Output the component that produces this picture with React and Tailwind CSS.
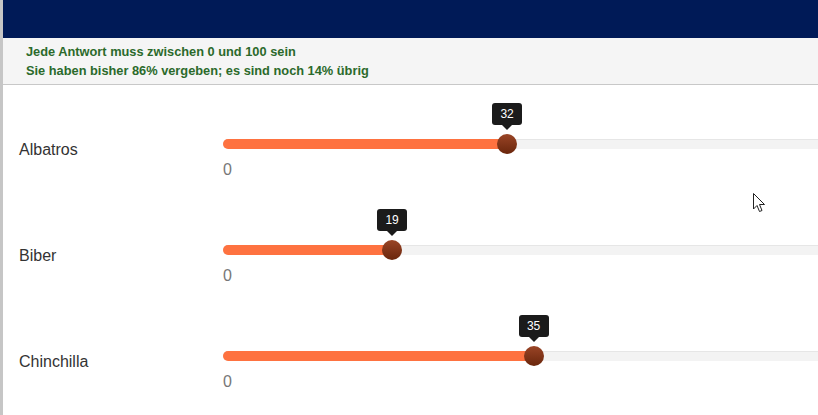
const animals = [
  { name: "Albatros", value: 32 },
  { name: "Biber", value: 19 },
  { name: "Chinchilla", value: 35 },
];

const UNIT = 8.846;

const SliderRow = ({ name, value }) => {
  const pos = value * UNIT + 1;
  return (
    <div className="flex h-[106px] items-start">
      <div className="w-[220px] shrink-0 pl-[16px] mt-[55px] text-[16px] leading-[20px] text-[#333]">
        {name}
      </div>
      <div className="shrink-0 pt-[54px]">
        <div className="relative w-[885px] h-[10px] rounded-full bg-[#f3f3f3] border-t border-[#e6e6e6]">
          <div
            className="absolute left-0 top-[-1px] h-[10px] rounded-full bg-[#fe7240]"
            style={{ width: pos }}
          />
          <div
            className="absolute top-[-6px] w-[20px] h-[20px] -ml-[10px] rounded-full bg-gradient-to-b from-[#9a4526] to-[#6a260c]"
            style={{ left: pos }}
          />
          <div
            className="absolute top-[-37px] -translate-x-1/2 flex flex-col items-center"
            style={{ left: pos }}
          >
            <div className="w-[30px] h-[22px] rounded-[3px] bg-[#1b1b1b] text-white text-[12px] leading-[22px] text-center">
              {value}
            </div>
            <div className="w-0 h-0 border-l-[5px] border-r-[5px] border-t-[5px] border-l-transparent border-r-transparent border-t-[#1b1b1b]" />
          </div>
        </div>
        <div className="mt-[11px] text-[16px] leading-[20px] text-[#777]">0</div>
      </div>
    </div>
  );
};

const App = () => {
  return (
    <div className="relative flex w-[818px] h-[415px] overflow-hidden bg-white font-['Liberation_Sans',Arial,sans-serif]">
      <div className="w-[3px] shrink-0 bg-[#c6c6c6]" />
      <div className="flex-1 flex flex-col min-w-0">
        <div className="h-[38px] bg-[#001a57]" />
        <div className="bg-[#f5f5f5] border-b border-[#c8c8c8] py-[4px] pl-[23px] text-[12.8px] leading-[19px] font-bold text-[#2b6a2b]">
          <div>Jede Antwort muss zwischen 0 und 100 sein</div>
          <div>Sie haben bisher 86% vergeben; es sind noch 14% übrig</div>
        </div>
        <div>
          {animals.map((a) => (
            <SliderRow key={a.name} name={a.name} value={a.value} />
          ))}
        </div>
      </div>
      <svg
        className="absolute left-[753px] top-[193px]"
        width="14"
        height="21"
        viewBox="0 0 14 21"
      >
        <path
          d="M0.5 0.5 L0.5 16 L4 12.5 L6.5 18.5 L9 17.5 L6.5 11.5 L11.5 11.5 Z"
          fill="white"
          stroke="#222"
          strokeWidth="1"
        />
      </svg>
    </div>
  );
};

export default App;
